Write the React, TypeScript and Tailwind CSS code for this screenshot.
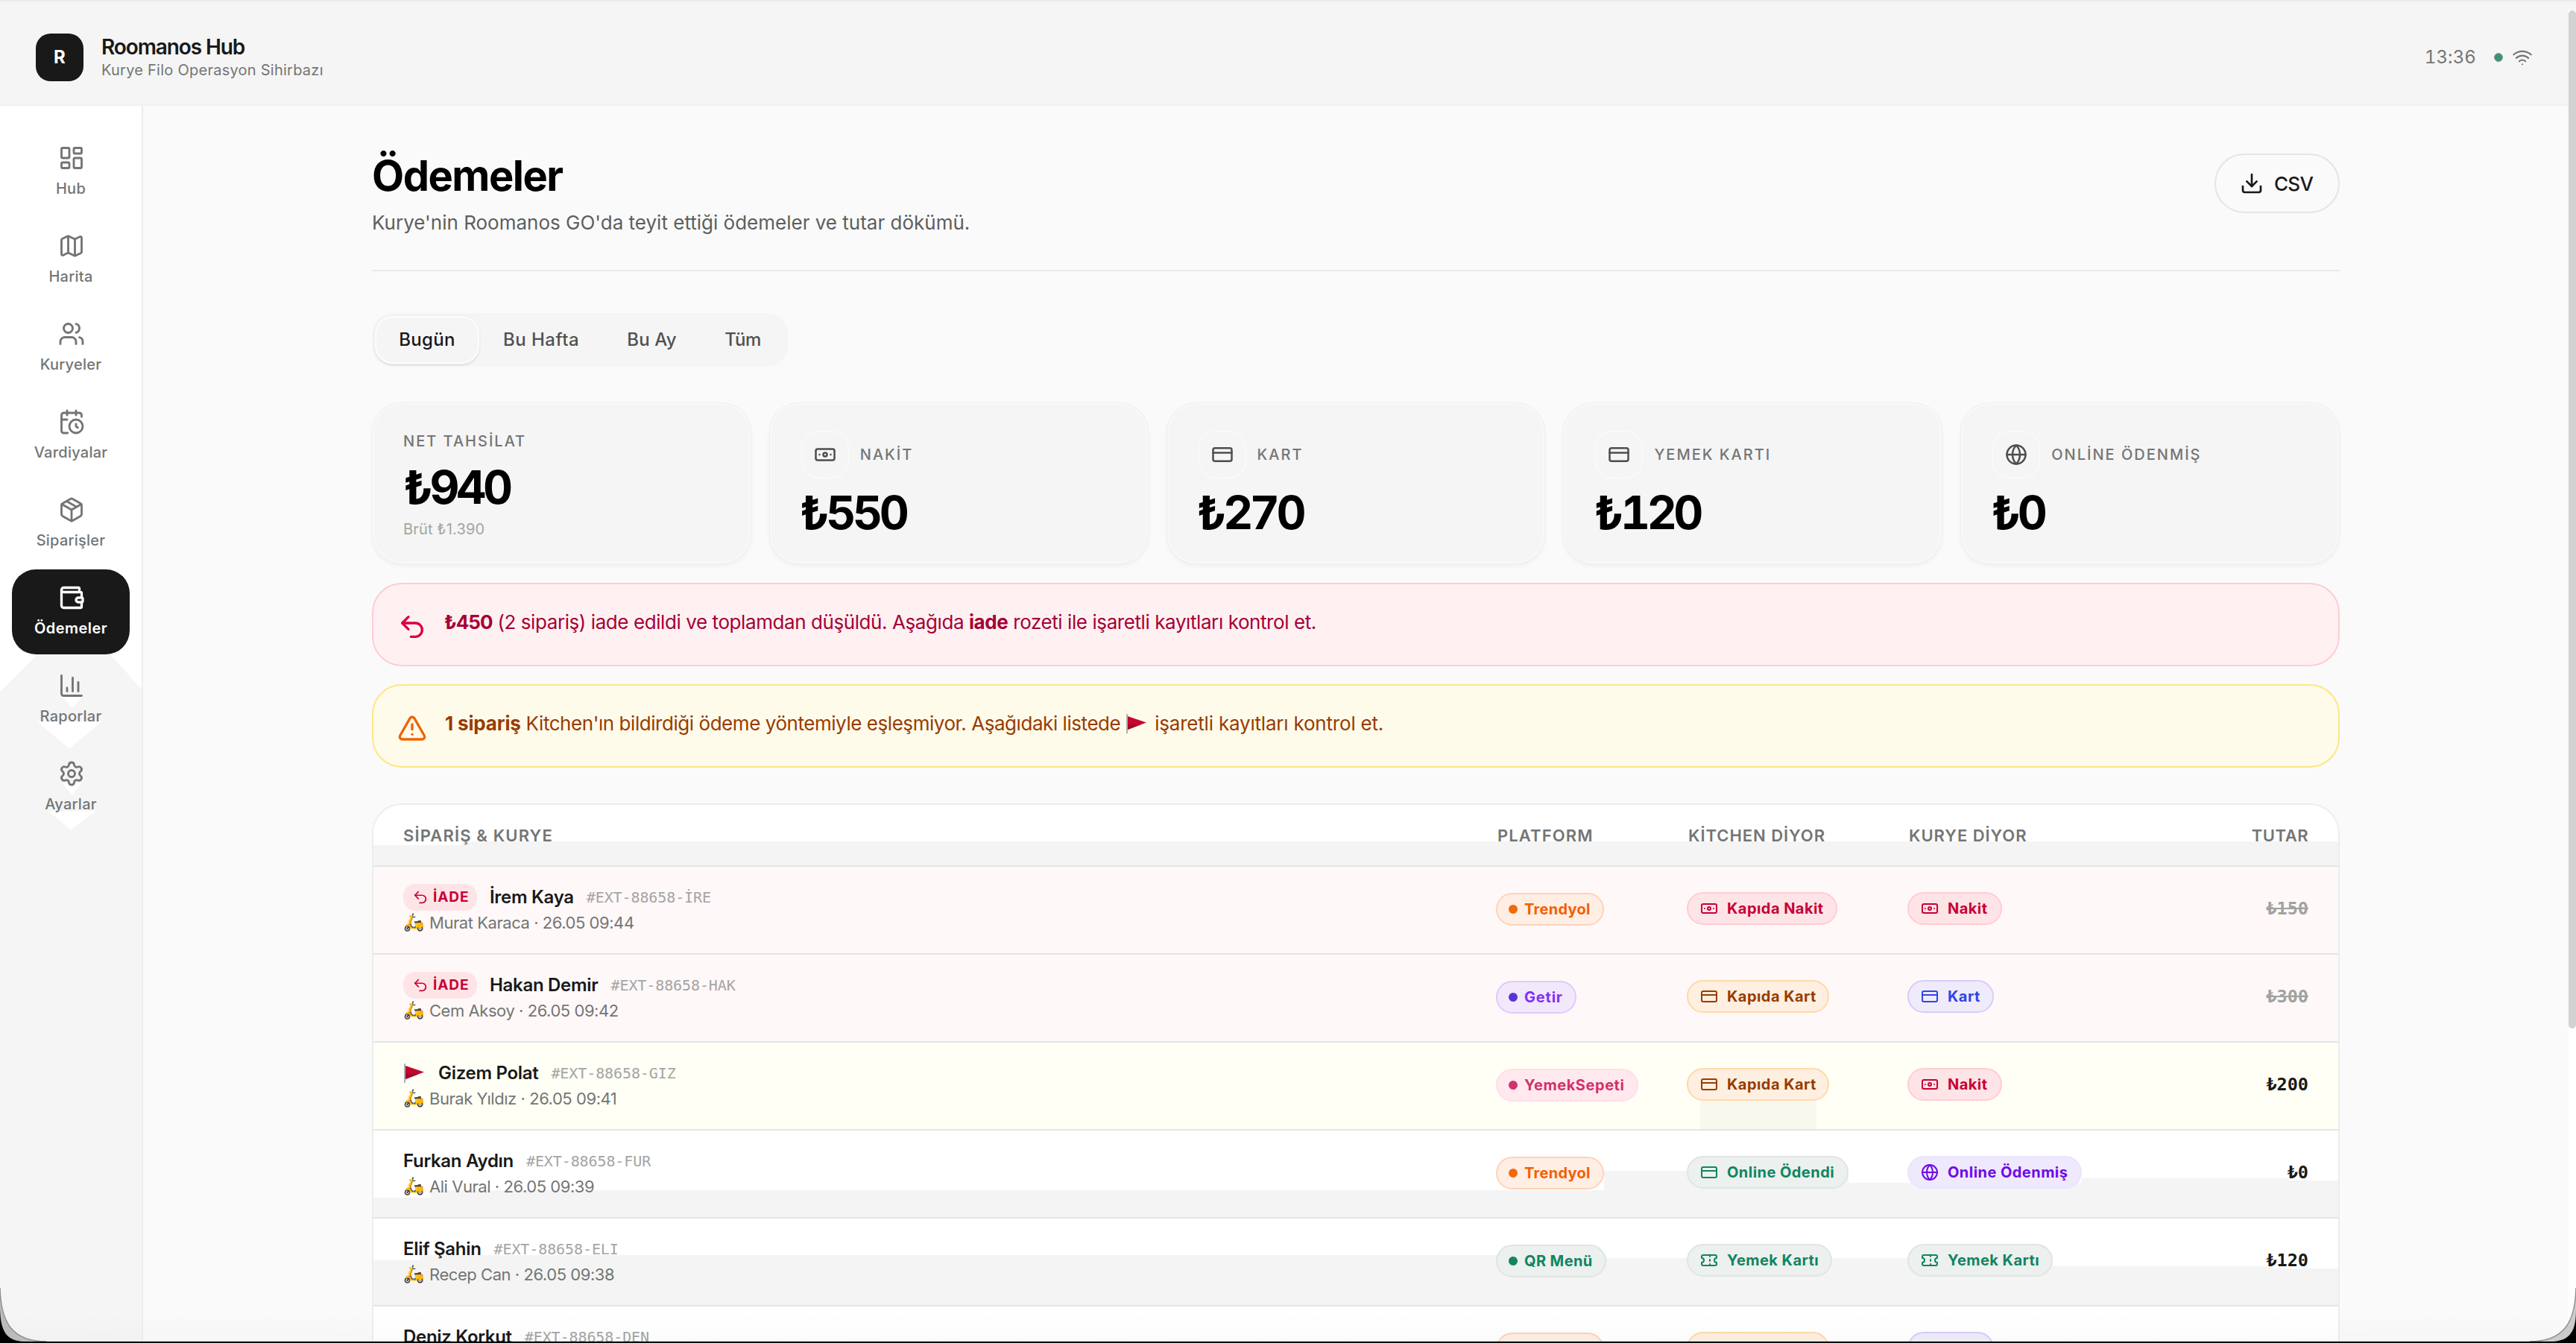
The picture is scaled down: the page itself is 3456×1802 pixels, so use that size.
import React from "react";
import {
  Banknote,
  CalendarClock,
  ChartColumn,
  CreditCard,
  Download,
  Globe,
  LayoutDashboard,
  Map as MapIcon,
  Package,
  Settings,
  Ticket,
  TriangleAlert,
  Undo2,
  Users,
  Wallet,
  Wifi,
  type LucideIcon,
} from "lucide-react";

const NAV: { label: string; icon: LucideIcon; active?: boolean }[] = [
  { label: "Hub", icon: LayoutDashboard },
  { label: "Harita", icon: MapIcon },
  { label: "Kuryeler", icon: Users },
  { label: "Vardiyalar", icon: CalendarClock },
  { label: "Siparişler", icon: Package },
  { label: "Ödemeler", icon: Wallet, active: true },
  { label: "Raporlar", icon: ChartColumn },
  { label: "Ayarlar", icon: Settings },
];

const TABS = [
  { label: "Bugün", width: "w-[140px] tracking-[0.3px]", active: true },
  { label: "Bu Hafta", width: "w-[166px] tracking-[0.5px]" },
  { label: "Bu Ay", width: "w-[131px] tracking-[0.1px]" },
  { label: "Tüm", width: "w-[113px] tracking-[-0.5px]" },
];

const STATS: { label: string; value: string; icon: LucideIcon }[] = [
  { label: "NAKİT", value: "₺550", icon: Banknote },
  { label: "KART", value: "₺270", icon: CreditCard },
  { label: "YEMEK KARTI", value: "₺120", icon: CreditCard },
  { label: "ONLİNE ÖDENMİŞ", value: "₺0", icon: Globe },
];

type PlatformName = "Trendyol" | "Getir" | "YemekSepeti" | "QR Menü";
const PLATFORMS: Record<PlatformName, { box: string; dot: string }> = {
  Trendyol: { box: "w-[145px] bg-[#ffeee4] border-[#ffd2b8] text-[#f45f00] tracking-[0.3px]", dot: "bg-[#f2690a]" },
  Getir: { box: "w-[108px] bg-[#f1e9fb] border-[#dccbfb] text-[#8430f7] tracking-[0.8px]", dot: "bg-[#5b34d2]" },
  YemekSepeti: { box: "w-[191px] bg-[#ffe9ee] border-[#ffdfe6] text-[#d0326c] tracking-[0.55px]", dot: "bg-[#d0326c]" },
  "QR Menü": { box: "w-[148px] bg-[#ecf0ef] border-[#e0e5e3] text-[#0f8560] tracking-[0.4px]", dot: "bg-[#0f8560]" },
};

type MethodName = "Kapıda Nakit" | "Nakit" | "Kapıda Kart" | "Kart" | "Online Ödendi" | "Online Ödenmiş" | "Yemek Kartı";
const METHODS: Record<MethodName, { box: string; icon: LucideIcon }> = {
  "Kapıda Nakit": { box: "w-[202px] bg-[#ffe4e7] border-[#ffccd3] text-[#c70036]", icon: Banknote },
  Nakit: { box: "w-[127px] bg-[#ffe4e7] border-[#ffccd3] text-[#c70036]", icon: Banknote },
  "Kapıda Kart": { box: "w-[191px] bg-[#ffefe0] border-[#fddaa8] text-[#973c00]", icon: CreditCard },
  Kart: { box: "w-[116px] bg-[#efebfb] border-[#d6cdfa] text-[#2f46e2]", icon: CreditCard },
  "Online Ödendi": { box: "w-[217px] bg-[#ecf0ef] border-[#e0e5e3] text-[#0f8560]", icon: CreditCard },
  "Online Ödenmiş": { box: "w-[234px] bg-[#efe9fd] border-[#ebe4fd] text-[#7008e7]", icon: Globe },
  "Yemek Kartı": { box: "w-[195px] bg-[#ecf0ef] border-[#e0e5e3] text-[#0f8560]", icon: Ticket },
};

type Order = {
  name: string;
  code: string;
  courier?: string;
  platform: PlatformName;
  kitchen: MethodName;
  kurye: MethodName;
  amount?: string;
  kind?: "refund" | "flag";
  bands?: string[];
};

const ORDERS: Order[] = [
  { name: "İrem Kaya", code: "#EXT-88658-İRE", courier: "Murat Karaca · 26.05 09:44", platform: "Trendyol", kitchen: "Kapıda Nakit", kurye: "Nakit", amount: "₺150", kind: "refund" },
  { name: "Hakan Demir", code: "#EXT-88658-HAK", courier: "Cem Aksoy · 26.05 09:42", platform: "Getir", kitchen: "Kapıda Kart", kurye: "Kart", amount: "₺300", kind: "refund" },
  { name: "Gizem Polat", code: "#EXT-88658-GIZ", courier: "Burak Yıldız · 26.05 09:41", platform: "YemekSepeti", kitchen: "Kapıda Kart", kurye: "Nakit", amount: "₺200", kind: "flag" },
  {
    name: "Furkan Aydın", code: "#EXT-88658-FUR", courier: "Ali Vural · 26.05 09:39", platform: "Trendyol", kitchen: "Online Ödendi", kurye: "Online Ödenmiş", amount: "₺0",
    bands: ["w-[76px] h-[90px]", "w-[1575px] h-[80px]", "w-[328px] h-[54px]", "w-[313px] h-[70px]", "w-[277px] h-[64px]", "grow h-[67px]"],
  },
  {
    name: "Elif Şahin", code: "#EXT-88658-ELI", courier: "Recep Can · 26.05 09:38", platform: "QR Menü", kitchen: "Yemek Kartı", kurye: "Yemek Kartı", amount: "₺120",
    bands: ["w-[62px] h-[56px]", "w-[1592px] h-[49px]", "w-[599px] h-[53px]", "w-[296px] h-[64px]", "grow h-[67px]"],
  },
  { name: "Deniz Korkut", code: "#EXT-88658-DEN", platform: "Trendyol", kitchen: "Kapıda Kart", kurye: "Kart" },
];

const GRID = "grid grid-cols-[1466px_256px_296px_1fr] px-10";

function Flag() {
  return (
    <svg viewBox="0 0 30 28" className="inline-block h-7 w-[30px] shrink-0">
      <path d="M2 1v26" stroke="#a9a3a3" strokeWidth="1.8" />
      <path d="M3 4 28 12.5 3 22z" fill="#c4062f" />
      <path d="M3 15 20 15.6 3 22z" fill="#9d0a2c" />
    </svg>
  );
}

/* White upper part of a row, laid over the row's grey base. */
function Bands({ parts }: { parts: string[] }) {
  return (
    <div className="absolute inset-0 flex items-start">
      {parts.map((p) => (
        <div key={p} className={`bg-white ${p}`} />
      ))}
    </div>
  );
}

function PlatformBadge({ name }: { name: PlatformName }) {
  const p = PLATFORMS[name];
  return (
    <div className={`flex h-11 items-center gap-[9px] whitespace-nowrap rounded-full border-2 pl-[15px] text-[20px] font-bold ${p.box}`}>
      <span className={`size-3 shrink-0 rounded-full ${p.dot}`} />
      {name}
    </div>
  );
}

function MethodBadge({ name }: { name: MethodName }) {
  const m = METHODS[name];
  const Icon = m.icon;
  return (
    <div className={`flex h-11 items-center gap-3 whitespace-nowrap rounded-full border-2 pl-4 text-[20px] font-bold tracking-[0.45px] ${m.box}`}>
      <Icon size={24} strokeWidth={2} className="shrink-0" />
      {name}
    </div>
  );
}

function OrderRow({ o }: { o: Order }) {
  const bg = o.kind === "refund" ? "bg-[#fff8f8]" : o.kind === "flag" ? "bg-[#fffff6]" : o.bands ? "bg-[#f4f4f4]" : "bg-white";
  return (
    <div className={`relative h-[118px] border-b-2 border-[#e2e6e4] ${bg}`}>
      {o.bands && <Bands parts={o.bands} />}
      <div className={`relative ${GRID}`}>
        <div className="pt-[23px]">
          <div className="flex h-9 items-center gap-[17px]">
            {o.kind === "refund" && (
              <span className="flex h-9 w-[99px] items-center gap-[6px] rounded-[16px] bg-[#ffe4e7] pl-3 text-[19px] font-bold tracking-[0.9px] text-[#c70036]">
                <Undo2 size={22} strokeWidth={1.9} className="shrink-0" />
                İADE
              </span>
            )}
            {o.kind === "flag" && <Flag />}
            <span className="text-[24px] font-semibold tracking-[-0.3px] text-[#191919]">{o.name}</span>
            <span className="font-['DejaVu_Sans_Mono',monospace] text-[20px] tracking-[-0.1px] text-[#a3a5a4]">{o.code}</span>
          </div>
          {o.courier && (
            <div className="flex h-8 items-center text-[22px] leading-8 tracking-[-0.45px] text-[#737675]">
              <span className="w-[35px] shrink-0 font-['Noto_Color_Emoji'] text-[23px] tracking-normal">🛵</span>
              {o.courier}
            </div>
          )}
        </div>
        <div className="pt-[35px]">
          <PlatformBadge name={o.platform} />
        </div>
        <div className="pt-[34px]">
          <MethodBadge name={o.kitchen} />
          {o.kind === "flag" && <div className="ml-[18px] h-[38px] w-[156px] bg-[#f9f8ef]" />}
        </div>
        <div className="flex items-start justify-between pt-[34px]">
          <MethodBadge name={o.kurye} />
          <span
            className={`font-['DejaVu_Sans_Mono',monospace] text-[23.5px] font-bold leading-[44px] ${
              o.kind === "refund" ? "text-[#9fa3a1] line-through" : "text-[#191919]"
            }`}
          >
            {o.amount}
          </span>
        </div>
      </div>
    </div>
  );
}

const CARD =
  "h-[217px] rounded-[40px] bg-[#f5f5f5] pl-[42px] pt-[38px] shadow-[inset_0_0_0_1px_#edefee,inset_0_0_0_3px_rgba(255,255,255,0.4),0_3px_5px_rgba(20,50,40,0.05)]";
const VALUE = "text-[62px] font-bold tabular-nums leading-[66px] tracking-[-4.4px] text-black";
const CAPTION = "text-[20px] font-medium leading-7 tracking-[2px] text-[#737575]";

export default function App() {
  return (
    <div className="relative flex h-[1802px] w-full overflow-hidden bg-[#fafafa] font-['Inter',sans-serif]">
      <div className="flex min-w-0 grow flex-col">
        <header className="flex h-[142px] shrink-0 items-center justify-between border-b-2 border-t-2 border-b-[#eff1f0] border-t-[#e9edeb] bg-[#f5f5f5] pl-12 pr-12 pt-3">
          <div className="flex items-center gap-6">
            <div className="flex size-16 items-center justify-center rounded-[20px] bg-[#191919] text-[24px] font-bold text-white">R</div>
            <div className="whitespace-nowrap">
              <div className="text-[28px] font-semibold leading-[34px] tracking-[-1.1px] text-[#191919]">Roomanos Hub</div>
              <div className="text-[20px] leading-7 tracking-[0.25px] text-[#737575]">Kurye Filo Operasyon Sihirbazı</div>
            </div>
          </div>
          <div className="flex items-center">
            <span className="mr-[24px] text-[24px] tabular-nums tracking-[0.1px] text-[#737575]">13:36</span>
            <span className="mr-3 size-3 rounded-full border border-[#8b9892] bg-[#3b9374]" />
            <Wifi size={28} strokeWidth={1.8} className="text-[#737575]" />
          </div>
        </header>

        <div className="flex min-h-0 grow">
          <aside className="relative w-[192px] shrink-0 border-r-2 border-[#ebeeed] bg-white">
            <svg viewBox="0 0 190 922" className="absolute bottom-0 left-0 h-[924px] w-[190px]" preserveAspectRatio="none">
              <path d="M50 0H148L190 47V922H0V50z" fill="#f5f5f5" />
              <path d="M83 56H111L97 72z M50 90H137L93 126z M83 172H110L97 188z M65 210H128L95 235z" fill="#fff" />
            </svg>
            <nav className="relative flex flex-col gap-1 px-4 pt-8">
              {NAV.map(({ label, icon: Icon, active }) => (
                <a
                  key={label}
                  className={`flex h-[114px] flex-col items-center rounded-[32px] pt-5 text-[20px] leading-7 ${
                    active ? "bg-[#191919] font-semibold tracking-[0.45px] text-white" : "font-medium tracking-[0.25px] text-[#737575]"
                  }`}
                >
                  <Icon size={36} strokeWidth={active ? 2.2 : 1.9} className="mb-[9px] ml-[2px] shrink-0" />
                  {label}
                </a>
              ))}
            </nav>
          </aside>

          <main className="flex min-w-0 grow flex-col items-center pt-[62px]">
            <div className="flex w-[2640px] flex-col">
              <div className="flex h-[160px] items-start justify-between border-b-2 border-[#e9eceb]">
                <div>
                  <h1 className="text-[56px] font-bold leading-[64px] tracking-[-1.5px] text-black">Ödemeler</h1>
                  <p className="mt-[11px] text-[26px] leading-10 text-[#5d5f5e]">
                    Kurye'nin Roomanos GO'da teyit ettiği ödemeler ve tutar dökümü.
                  </p>
                </div>
                <button className="mt-[2px] flex h-20 w-[168px] items-center gap-[14px] rounded-full border-2 border-[#e3e6e5] pl-8 text-[26px] font-medium tracking-[-0.7px] text-[#191919]">
                  <Download size={32} strokeWidth={2} />
                  CSV
                </button>
              </div>

              <div className="mt-14 flex h-[72px] w-[558px] rounded-[28px] bg-[#f5f5f5] p-1">
                {TABS.map((t) => (
                  <div
                    key={t.label}
                    className={`flex items-center justify-center rounded-[24px] text-[24px] font-medium ${t.width} ${
                      t.active
                        ? "text-[#191919] shadow-[inset_0_0_0_2px_rgba(255,255,255,0.8),0_0_0_1px_#eceeed,0_2px_3px_rgba(20,50,40,0.14)]"
                        : "text-[#505151]"
                    }`}
                  >
                    {t.label}
                  </div>
                ))}
              </div>

              <div className="mt-12 grid grid-cols-5 gap-6">
                <div className={CARD}>
                  <div className={`${CAPTION} tracking-[1.6px]`}>NET TAHSİLAT</div>
                  <div className={`mt-[15px] ${VALUE}`}>₺940</div>
                  <div className="mt-[9px] text-[20px] leading-7 tracking-[0.2px] text-[#a3a5a4]">Brüt ₺1.390</div>
                </div>
                {STATS.map(({ label, value, icon: Icon }) => (
                  <div key={label} className={CARD}>
                    <div className="flex items-center gap-[15px] pl-px">
                      <div className="flex size-16 items-center justify-center rounded-[24px] shadow-[inset_0_0_0_1px_rgba(255,255,255,0.7)]">
                        <Icon size={30} strokeWidth={2} className="text-[#4c4e4d]" />
                      </div>
                      <div className={CAPTION}>{label}</div>
                    </div>
                    <div className={`mt-[13px] -ml-px ${VALUE}`}>{value}</div>
                  </div>
                ))}
              </div>

              <div className="mt-[25px] flex h-[112px] items-start gap-[23px] rounded-[40px] border-2 border-[#ffccd3] bg-[#fff1f2] pl-8 pt-[31px] text-[26px] leading-10 tracking-[-0.42px] text-[#a50036]">
                <Undo2 size={40} strokeWidth={2} className="mt-[6px] text-[#d9003f]" />
                <p>
                  <b className="tracking-[-1px]">₺450</b> (2 sipariş) iade edildi ve toplamdan düşüldü. Aşağıda <b>iade</b> rozeti ile işaretli kayıtları kontrol et.
                </p>
              </div>

              <div className="mt-6 flex h-[112px] items-start gap-6 rounded-[40px] border-2 border-[#fee685] bg-[#fffbeb] pl-8 pt-[31px] text-[26px] leading-10 tracking-[-0.45px] text-[#973c00]">
                <TriangleAlert size={40} strokeWidth={2} className="mt-[6px] text-[#f06400]" />
                <p className="flex items-center whitespace-pre">
                  <b className="tracking-[-0.15px]">1 sipariş</b> Kitchen'ın bildirdiği ödeme yöntemiyle eşleşmiyor. Aşağıdaki listede <Flag />
                  <span className="ml-[9px] tracking-[-0.2px]">işaretli kayıtları kontrol et.</span>
                </p>
              </div>

              <div className="mt-12 overflow-hidden rounded-t-[40px] border-x-2 border-t-2 border-[#ebeeed] bg-white">
                <div className="relative h-[83px] border-b-2 border-[#e2e6e4] bg-[#f4f4f4]">
                  <Bands parts={["w-[119px] h-[54px]", "grow h-[49px]"]} />
                  <div className={`relative ${GRID} pt-[25px] text-[22px] font-semibold leading-8 tracking-[0.95px] text-[#737575]`}>
                    <div className="tracking-[1.15px]">SİPARİŞ &amp; KURYE</div>
                    <div className="pl-[2px] tracking-[1.1px]">PLATFORM</div>
                    <div className="pl-[2px]">KİTCHEN DİYOR</div>
                    <div className="flex justify-between pl-[2px]">
                      <span>KURYE DİYOR</span>
                      <span className="tracking-[0.5px]">TUTAR</span>
                    </div>
                  </div>
                </div>
                {ORDERS.map((o) => (
                  <OrderRow key={o.name} o={o} />
                ))}
              </div>
            </div>
          </main>
        </div>
      </div>

      <div className="flex w-[10px] shrink-0 flex-col border-t-2 border-[#e9edeb] bg-white">
        <div className="h-3 bg-[#f5f5f5]" />
        <div className="h-[1366px] rounded-full bg-[#d2d2d2]" />
      </div>

      <div className="absolute inset-x-0 bottom-0 h-[42px] border-b-2 border-black bg-linear-to-b from-transparent to-black/[0.015]" />
      <svg viewBox="0 0 62 78" className="absolute bottom-0 left-0 h-[78px] w-[62px]">
        <path d="M0 4C1 50 16 76 62 76V78H0z" fill="#b9bcba" />
        <path d="M0 4C1 50 16 76 62 76" fill="none" stroke="#8c908e" strokeWidth="1.5" />
        <path d="M0 28C0 62 8 76 34 76H62V78H0z" fill="#000" />
      </svg>
      <svg viewBox="0 0 62 78" className="absolute bottom-0 right-0 h-[78px] w-[62px] -scale-x-100">
        <path d="M0 4C1 50 16 76 62 76V78H0z" fill="#c9cccb" />
        <path d="M0 4C1 50 16 76 62 76" fill="none" stroke="#8c908e" strokeWidth="1.5" />
        <path d="M0 34C0 62 8 76 34 76H62V78H0z" fill="#000" />
      </svg>
    </div>
  );
}
